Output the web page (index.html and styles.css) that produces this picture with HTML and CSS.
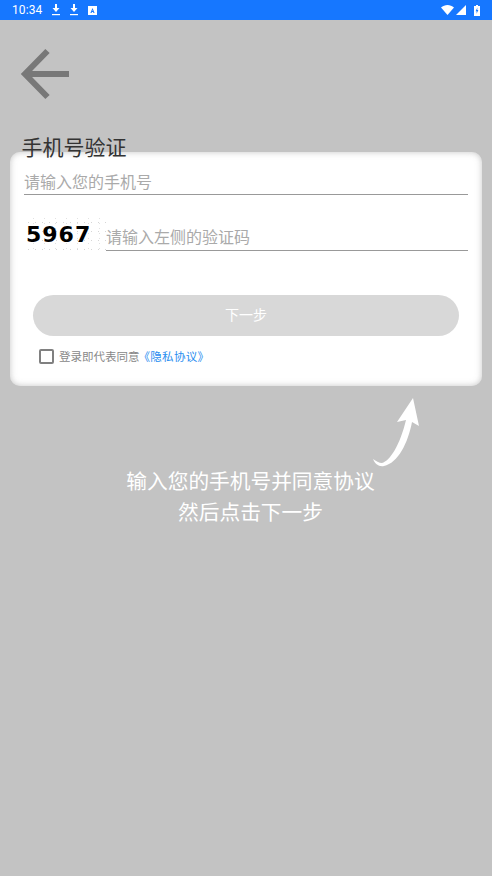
FILE: index.html
```html
<!DOCTYPE html>
<html lang="zh">
<head>
<meta charset="utf-8">
<title>手机号验证</title>
<link rel="stylesheet" href="styles.css">
</head>
<body>
<div class="statusbar">
  <div class="status-left">
    <span class="time">10:34</span>
    <svg class="st-ico" width="8" height="12" viewBox="0 0 8 12"><path d="M3 0h2v4h2.500L4 8 .5 4H3z" fill="#fff"/><rect y="10" width="8" height="1.200" fill="#fff"/></svg>
    <svg class="st-ico" width="8" height="12" viewBox="0 0 8 12"><path d="M3 0h2v4h2.500L4 8 .5 4H3z" fill="#fff"/><rect y="10" width="8" height="1.200" fill="#fff"/></svg>
    <svg class="st-ico" width="9" height="9" viewBox="0 0 9 9"><path fill-rule="evenodd" d="M0 0h9v9H0zM4.500 2 2.400 7h1.200l.3-1h1.200l.3 1h1.200zM4.500 3.800l.3 1.200H4.200z" fill="#fff"/></svg>
  </div>
  <div class="status-right">
    <svg width="13" height="10" viewBox="0 0 13 10"><path d="M0 2.600C3.600-.8 9.400-.8 13 2.600L6.500 10z" fill="#fff"/></svg>
    <svg width="10" height="10" viewBox="0 0 10 10"><path d="M10 0v10H0z" fill="#fff"/></svg>
    <svg class="batt" width="6" height="11" viewBox="0 0 6 11"><path fill-rule="evenodd" d="M2 0h2v1h2v10H0V1h2zM3.400 2.400 1.600 6.200h1.100l-.2 2.600 1.900-3.900H3.200z" fill="#fff"/></svg>
  </div>
</div>

<main class="page">
  <svg class="back" width="50" height="52" viewBox="0 0 50 52"><path d="M49 26H5M27.500 3 5 26 27.500 49" fill="none" stroke="#787878" stroke-width="6"/></svg>
  <h1 class="title">手机号验证</h1>

  <section class="card">
    <div class="field field-phone"><span class="ph">请输入您的手机号</span></div>
    <div class="captcha-row">
      <div class="captcha">5967</div>
      <div class="field field-code"><span class="ph">请输入左侧的验证码</span></div>
    </div>
    <div class="btn">下一步</div>
    <div class="agree">
      <span class="check"></span>
      <span class="agree-text">登录即代表同意</span><span class="agree-link">《隐私协议》</span>
    </div>
    <svg class="arrow" width="52" height="74" viewBox="0 0 52 74"><path d="M3 64C6 66 9 68 12 68 20 66 30 50 36 25L27 27 43 3 49 31 42 27C38 48 28 68 14 71 9 72 5 69 3 64Z" fill="#fff"/></svg>
  </section>

  <p class="hint">输入您的手机号并同意协议<br>然后点击下一步</p>
</main>
</body>
</html>
```

FILE: styles.css
```css
* { box-sizing: border-box; }
html, body { margin: 0; padding: 0; }
body {
  width: 492px;
  height: 876px;
  overflow: hidden;
  background: #c3c3c3;
  font-family: "Noto Sans CJK SC", "Noto Sans", sans-serif;
}
.statusbar {
  height: 20px;
  background: #1677ff;
  display: flex;
  justify-content: space-between;
  align-items: center;
  padding: 0 12px 0 12px;
  color: #fff;
}
.status-left, .status-right { display: flex; align-items: center; }
.time { font: 400 12px/20px Roboto, sans-serif; width: 29px; margin-right: 11px; letter-spacing: .1px; white-space: nowrap; }
.st-ico { margin-right: 10px; }
.status-right { gap: 2px; }
.batt { margin-left: 6px; }
.page { padding: 0 10px; }
.back { display: block; margin: 28px 0 0 10px; }
.title {
  margin: 32px 0 -8px 11.500px;
  font-size: 21px;
  line-height: 28px;
  font-weight: 400;
  color: #333;
  position: relative;
  z-index: 1;
}
.card {
  position: relative;
  height: 234px;
  background: #fff;
  border-radius: 10px;
  box-shadow: inset 0 0 6px rgba(150,150,150,.55);
  padding: 10px 14px 0;
}
.field { border-bottom: 1.300px solid #999; display: flex; align-items: flex-end; }
.ph { font-size: 16px; line-height: 22px; color: #aaa; }
.field-phone { height: 33px; }
.field-phone .ph { margin-bottom: 2px; }
.field-code .ph { margin-bottom: 3px; }
.captcha-row { display: flex; align-items: flex-end; margin-top: 21px; }
.captcha {
  width: 82px;
  height: 34px;
  font: 700 22px/28px "DejaVu Sans", sans-serif;
  letter-spacing: 1px;
  color: #000;
  padding: 5px 0 0 2px;
  margin-bottom: 1px;
  background-image: radial-gradient(circle, #d6d6d6 .5px, transparent .8px), radial-gradient(circle, #e2e2e2 .5px, transparent .8px);
  background-size: 7px 9px, 11px 5px;
  background-position: 1px 2px, 4px 0;
}
.field-code { flex: 1; height: 33px; }
.btn {
  height: 41px;
  margin: 44px 9px 0;
  border-radius: 21px;
  background: #d8d8d8;
  color: #fff;
  font-size: 14px;
  line-height: 39px;
  text-align: center;
}
.agree { display: flex; align-items: center; margin: 12px 0 0 15px; font-size: 11.500px; line-height: 16px; }
.check { width: 15px; height: 15px; border: 2px solid #808080; border-radius: 2px; margin-right: 5px; }
.agree-text { color: #888; }
.agree-link { color: #2a8df0; margin-left: -1px; letter-spacing: .3px; }
.arrow { position: absolute; right: 60px; top: 243px; }
.hint {
  margin: 79px 0 0;
  padding-left: 9px;
  color: #fff;
  font-size: 20.700px;
  line-height: 31px;
  text-align: center;
}
```
